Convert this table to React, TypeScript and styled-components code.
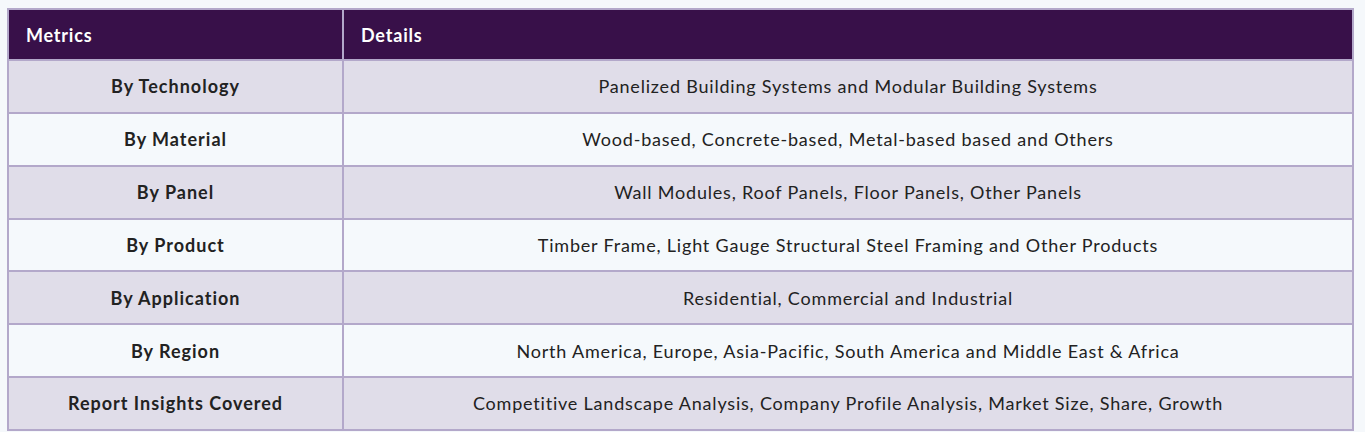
import React from 'react'
import styled, { createGlobalStyle } from 'styled-components'

const GlobalStyle = createGlobalStyle`
  html, body {
    margin: 0;
    padding: 0;
    background: #f5f8fb;
  }
  body {
    font-family: Lato, 'Noto Sans', sans-serif;
    color: #222;
  }
`

const Page = styled.div`
  padding: 8px 11px 0 7px;
`

const Table = styled.table`
  width: 100%;
  border-collapse: collapse;
  border: 2px solid #b3a8ca;
  table-layout: fixed;
`

const HeadCell = styled.th<{ $w?: number }>`
  box-sizing: border-box;
  background: #381049;
  color: #fff;
  font-weight: 700;
  font-size: 18px;
  letter-spacing: 0.8px;
  text-align: left;
  padding: 0 17px;
  height: 51px;
  border: 2px solid #b3a8ca;
  ${({ $w }) => ($w ? `width: ${$w}px;` : '')}
`

const Row = styled.tr<{ $alt: boolean }>`
  background: ${({ $alt }) => ($alt ? '#f5f9fc' : '#e0dde9')};
`

const Cell = styled.td<{ $bold?: boolean }>`
  height: 50.85px;
  padding: 0 16px;
  text-align: center;
  font-size: 18px;
  letter-spacing: ${({ $bold }) => ($bold ? '1px' : '0.8px')};
  font-weight: ${({ $bold }) => ($bold ? 700 : 400)};
  color: #222;
  border: 2px solid #b3a8ca;
`

const rows: [string, string][] = [
  ['By Technology', 'Panelized Building Systems and Modular Building Systems'],
  ['By Material', 'Wood-based, Concrete-based, Metal-based based and Others'],
  ['By Panel', 'Wall Modules, Roof Panels, Floor Panels, Other Panels'],
  ['By Product', 'Timber Frame, Light Gauge Structural Steel Framing and Other Products'],
  ['By Application', 'Residential, Commercial and Industrial'],
  ['By Region', 'North America, Europe, Asia-Pacific, South America and Middle East & Africa'],
  ['Report Insights Covered', 'Competitive Landscape Analysis, Company Profile Analysis, Market Size, Share, Growth'],
]

const App = () => {
  return (
    <>
      <GlobalStyle />
      <Page>
        <Table>
          <thead>
            <tr>
              <HeadCell $w={335}>Metrics</HeadCell>
              <HeadCell>Details</HeadCell>
            </tr>
          </thead>
          <tbody>
            {rows.map(([metric, details], i) => (
              <Row key={metric} $alt={i % 2 === 1}>
                <Cell $bold>{metric}</Cell>
                <Cell>{details}</Cell>
              </Row>
            ))}
          </tbody>
        </Table>
      </Page>
    </>
  )
}

export default App
